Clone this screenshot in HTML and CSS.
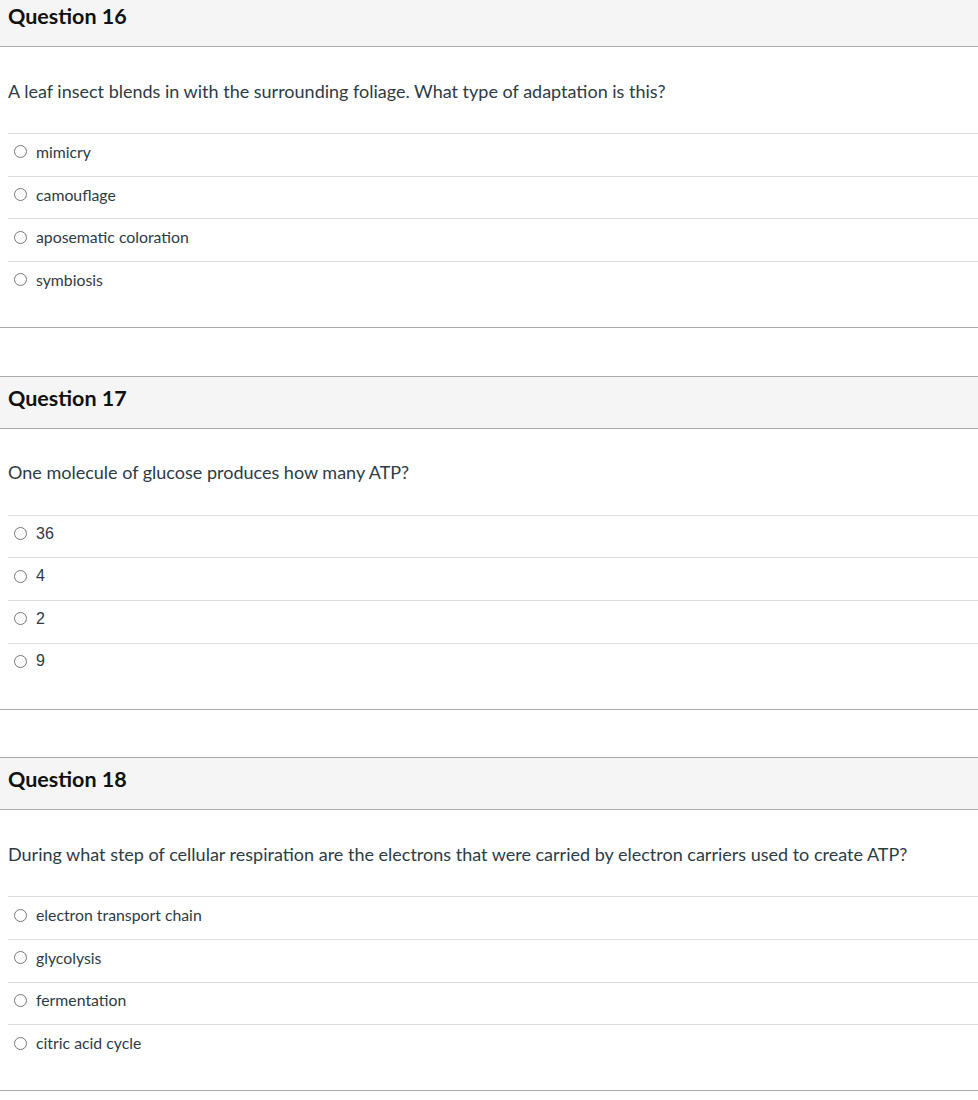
FILE: index.html
```html
<!DOCTYPE html>
<html lang="en">
<head>
<meta charset="utf-8">
<title>Quiz</title>
<link rel="stylesheet" href="styles.css">
</head>
<body>
<div class="quiz">
  <section class="question">
    <header class="q-header"><h2 class="q-title">Question 16</h2></header>
    <div class="q-body">
      <p class="q-text">A leaf insect blends in with the surrounding foliage. What type of adaptation is this?</p>
      <ul class="answers">
        <li class="answer"><label class="answer-label"><input type="radio" name="q16" class="radio"><span>mimicry</span></label></li>
        <li class="answer"><label class="answer-label"><input type="radio" name="q16" class="radio"><span>camouflage</span></label></li>
        <li class="answer"><label class="answer-label"><input type="radio" name="q16" class="radio"><span>aposematic coloration</span></label></li>
        <li class="answer"><label class="answer-label"><input type="radio" name="q16" class="radio"><span>symbiosis</span></label></li>
      </ul>
    </div>
  </section>
  <section class="question">
    <header class="q-header"><h2 class="q-title">Question 17</h2></header>
    <div class="q-body">
      <p class="q-text">One molecule of glucose produces how many ATP?</p>
      <ul class="answers">
        <li class="answer"><label class="answer-label"><input type="radio" name="q17" class="radio"><span class="num">36</span></label></li>
        <li class="answer"><label class="answer-label"><input type="radio" name="q17" class="radio"><span class="num">4</span></label></li>
        <li class="answer"><label class="answer-label"><input type="radio" name="q17" class="radio"><span class="num">2</span></label></li>
        <li class="answer"><label class="answer-label"><input type="radio" name="q17" class="radio"><span class="num">9</span></label></li>
      </ul>
    </div>
  </section>
  <section class="question">
    <header class="q-header"><h2 class="q-title">Question 18</h2></header>
    <div class="q-body">
      <p class="q-text">During what step of cellular respiration are the electrons that were carried by electron carriers used to create ATP?</p>
      <ul class="answers">
        <li class="answer"><label class="answer-label"><input type="radio" name="q18" class="radio"><span>electron transport chain</span></label></li>
        <li class="answer"><label class="answer-label"><input type="radio" name="q18" class="radio"><span>glycolysis</span></label></li>
        <li class="answer"><label class="answer-label"><input type="radio" name="q18" class="radio"><span>fermentation</span></label></li>
        <li class="answer"><label class="answer-label"><input type="radio" name="q18" class="radio"><span>citric acid cycle</span></label></li>
      </ul>
    </div>
  </section>
</div>
</body>
</html>
```
FILE: styles.css
```css
html, body {
  margin: 0;
  padding: 0;
  background: #fff;
}
body {
  font-family: Lato, "Liberation Sans", sans-serif;
  color: #2d3b45;
  overflow: hidden;
}
.quiz {
  margin-top: -6px;
}
.question {
  border-top: 1px solid #aaaaaa;
  border-bottom: 1px solid #aaaaaa;
  margin-bottom: 47.5px;
}
.q-header {
  background: #f5f5f5;
  border-bottom: 1px solid #aaaaaa;
  height: 52px;
  box-sizing: border-box;
  padding: 11px 8px 0;
}
.q-title {
  margin: 0;
  font-size: 21.5px;
  line-height: 21.5px;
  font-weight: 700;
  color: #111;
}
.q-body {
  padding: 30.5px 0 23.5px;
}
.q-text {
  margin: 0 8px 28.5px;
  font-size: 18px;
  line-height: 27px;
}
.answers {
  list-style: none;
  margin: 0 0 0 8px;
  padding: 0;
}
.answer {
  border-top: 1px solid #dddddd;
  padding: 7.9px 0 13.77px;
  line-height: 20px;
  font-size: 15.8px;
}
.answer-label {
  display: flex;
  align-items: center;
}
.radio {
  width: 13px;
  height: 13px;
  margin: 0 9px 0 6px;
  flex: none;
}
.num {
  font-family: "Liberation Sans", Arial, sans-serif;
  font-size: 16px;
}
```
